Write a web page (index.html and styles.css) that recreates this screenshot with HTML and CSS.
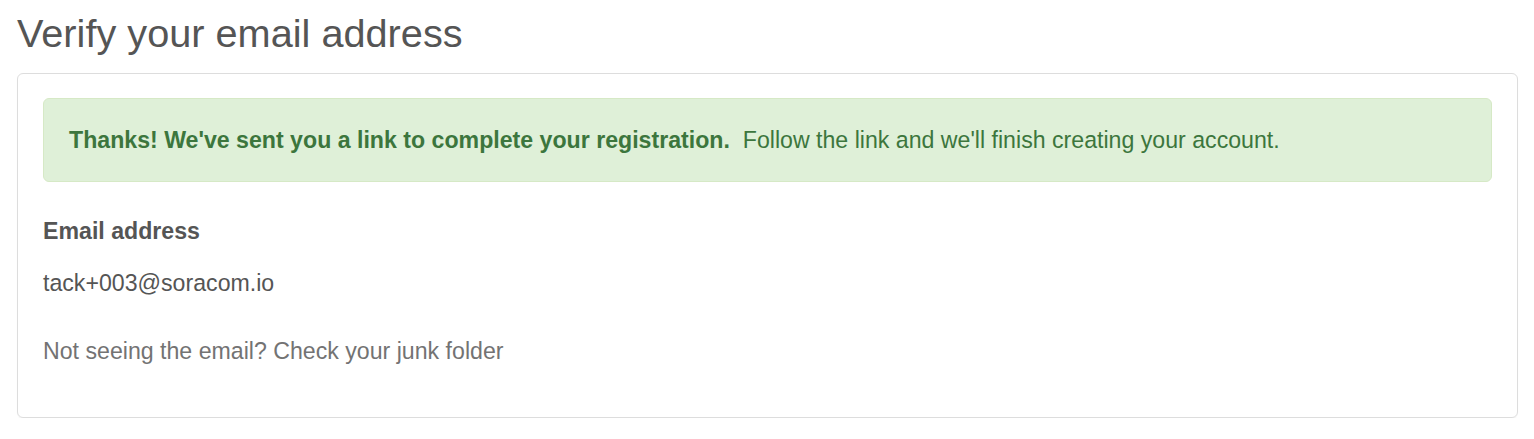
FILE: index.html
```html
<!DOCTYPE html>
<html lang="en">
<head>
<meta charset="utf-8">
<title>Verify your email address</title>
<link rel="stylesheet" href="styles.css">
</head>
<body>
<div class="page">
  <h1 class="title">Verify your email address</h1>
  <div class="panel">
    <div class="alert"><strong>Thanks! We've sent you a link to complete your registration.</strong>&nbsp; Follow the link and we'll finish creating your account.</div>
    <div class="field">
      <div class="label">Email address</div>
      <div class="value">tack+003@soracom.io</div>
    </div>
    <p class="help">Not seeing the email? Check your junk folder</p>
  </div>
</div>
</body>
</html>
```

FILE: styles.css
```css
html, body {
  margin: 0;
  padding: 0;
  background: #fff;
}
body {
  font-family: "Liberation Sans", Arial, sans-serif;
  font-size: 23.15px;
  line-height: 33px;
  color: #555;
}
.page {
  padding: 12px 16px 0 17px;
}
.title {
  margin: 0 0 18px;
  font-size: 39.7px;
  line-height: 43px;
  font-weight: normal;
  color: #555;
}
.panel {
  border: 1px solid #ddd;
  border-radius: 6px;
  padding: 24px 25px 24px 25px;
  box-shadow: 0 1px 1px rgba(0,0,0,0.04);
}
.alert {
  background: #dff0d8;
  border: 1px solid #d6e9c6;
  border-radius: 6px;
  color: #3c763d;
  padding: 24.5px 25px;
  margin-bottom: 33px;
}
.alert strong {
  font-weight: bold;
}
.label {
  font-weight: bold;
  margin-bottom: 18.7px;
}
.value {
  color: #555;
}
.help {
  margin: 35.4px 0 25px;
  color: #737373;
}
```
